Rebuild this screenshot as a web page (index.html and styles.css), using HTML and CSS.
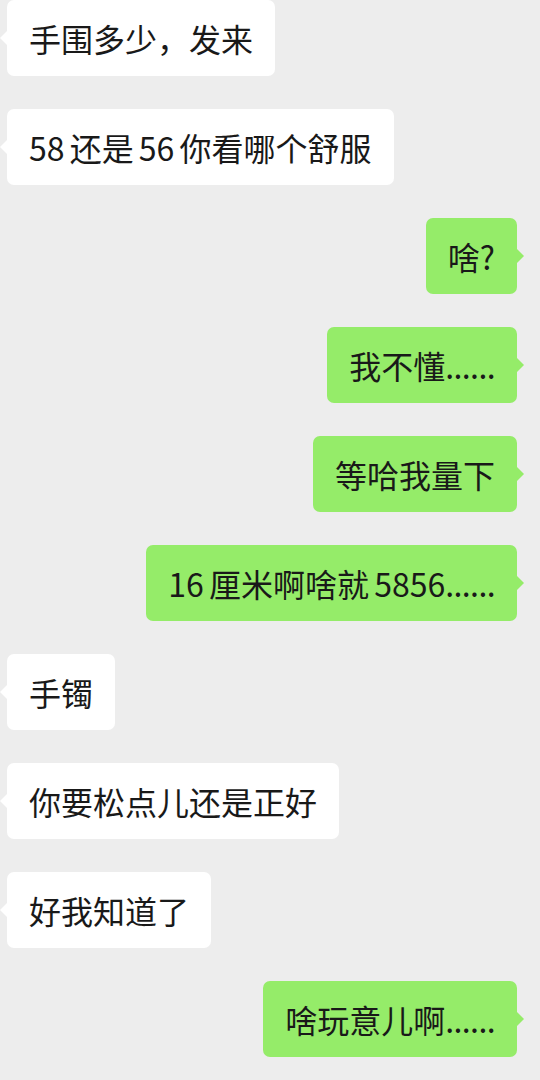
FILE: index.html
```html
<!DOCTYPE html>
<html>
<head>
    <meta charset="utf-8">
    <link rel="stylesheet" href="styles.css">
</head>
<body>
    <div class="chat">
        <div class="row left"><div class="bubble">手围多少，发来</div></div>
        <div class="row left"><div class="bubble">58 还是 56 你看哪个舒服</div></div>
        <div class="row right"><div class="bubble">啥?</div></div>
        <div class="row right"><div class="bubble">我不懂<span class="dots">......</span></div></div>
        <div class="row right"><div class="bubble">等哈我量下</div></div>
        <div class="row right"><div class="bubble">16 厘米啊啥就 5856<span class="dots">......</span></div></div>
        <div class="row left"><div class="bubble">手镯</div></div>
        <div class="row left"><div class="bubble">你要松点儿还是正好</div></div>
        <div class="row left"><div class="bubble">好我知道了</div></div>
        <div class="row right"><div class="bubble">啥玩意儿啊<span class="dots">......</span></div></div>
    </div>
</body>
</html>
```

FILE: styles.css
```css
body {
    margin: 0;
    background-color: #ededed;
    font-family: "Noto Sans CJK SC", "Noto Sans", sans-serif;
    color: #191919;
}

.chat {
    display: flex;
    flex-direction: column;
    gap: 33px;
    padding: 0 23px 0 7px;
}

.row {
    display: flex;
}

.row.left {
    justify-content: flex-start;
}

.row.right {
    justify-content: flex-end;
}

.bubble {
    position: relative;
    height: 76px;
    line-height: 76px;
    padding: 0 22px;
    font-size: 32px;
    word-spacing: -2px;
    border-radius: 7px;
    white-space: nowrap;
}

.dots {
    letter-spacing: -0.6px;
}

.left .bubble {
    background-color: #fff;
}

.right .bubble {
    background-color: #95ec69;
}

.bubble::before {
    content: "";
    position: absolute;
    top: 31px;
    border: 7px solid transparent;
}

.left .bubble::before {
    left: -14px;
    border-right-color: #fff;
}

.right .bubble::before {
    right: -14px;
    border-left-color: #95ec69;
}
```
